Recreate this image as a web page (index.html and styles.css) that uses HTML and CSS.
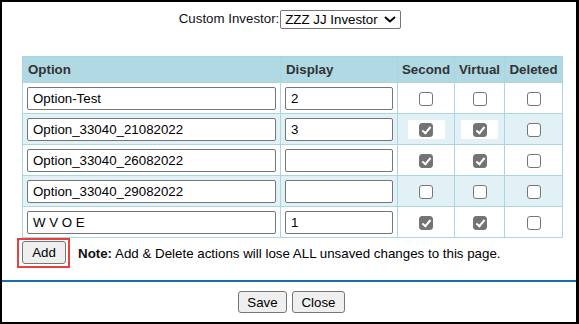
FILE: index.html
```html
<!DOCTYPE html>
<html lang="en">
<head>
    <meta charset="UTF-8">
    <title>Custom Investor Options</title>
    <link rel="stylesheet" href="styles.css">
</head>
<body>
<div class="frame">
    <div class="investor">
        <label for="investor">Custom Investor:</label><span class="picker"><select id="investor"><option>ZZZ JJ Investor</option></select><svg class="chev" width="12" height="7" viewBox="0 0 12 7"><path d="M1 1 L6 5.5 L11 1" fill="none" stroke="#000" stroke-width="2"/></svg></span>
    </div>

    <table class="options">
        <colgroup>
            <col class="c-option">
            <col class="c-display">
            <col class="c-second">
            <col class="c-virtual">
            <col class="c-deleted">
        </colgroup>
        <thead>
            <tr>
                <th class="left">Option</th>
                <th class="left">Display</th>
                <th>Second</th>
                <th>Virtual</th>
                <th>Deleted</th>
            </tr>
        </thead>
        <tbody>
            <tr>
                <td><input class="txt opt" type="text" value="Option-Test"></td>
                <td><input class="txt disp" type="text" value="2"></td>
                <td class="mid"><span class="cb"></span></td>
                <td class="mid"><span class="cb"></span></td>
                <td class="mid"><span class="cb"></span></td>
            </tr>
            <tr>
                <td><input class="txt opt" type="text" value="Option_33040_21082022"></td>
                <td><input class="txt disp" type="text" value="3"></td>
                <td class="mid"><span class="hilite"><span class="cb on"></span></span></td>
                <td class="mid"><span class="hilite"><span class="cb on"></span></span></td>
                <td class="mid"><span class="cb"></span></td>
            </tr>
            <tr>
                <td><input class="txt opt" type="text" value="Option_33040_26082022"></td>
                <td><input class="txt disp" type="text" value=""></td>
                <td class="mid"><span class="cb on"></span></td>
                <td class="mid"><span class="cb on"></span></td>
                <td class="mid"><span class="cb"></span></td>
            </tr>
            <tr>
                <td><input class="txt opt" type="text" value="Option_33040_29082022"></td>
                <td><input class="txt disp" type="text" value=""></td>
                <td class="mid"><span class="cb"></span></td>
                <td class="mid"><span class="cb"></span></td>
                <td class="mid"><span class="cb"></span></td>
            </tr>
            <tr>
                <td><input class="txt opt" type="text" value="W V O E"></td>
                <td><input class="txt disp" type="text" value="1"></td>
                <td class="mid"><span class="cb on"></span></td>
                <td class="mid"><span class="cb on"></span></td>
                <td class="mid"><span class="cb"></span></td>
            </tr>
        </tbody>
    </table>

    <div class="actions">
        <span class="focus"><button class="btn add">Add</button></span>
        <span class="note"><b>Note:</b> Add &amp; Delete actions will lose ALL unsaved changes to this page.</span>
    </div>

    <div class="footer">
        <button class="btn save">Save</button>
        <button class="btn close">Close</button>
    </div>
</div>
</body>
</html>
```

FILE: styles.css
```css
body {
    margin: 0;
    font-family: "Liberation Sans", Arial, sans-serif;
    font-size: 13px;
    color: #000;
    background: #fff;
}
.frame {
    width: 579px;
    height: 324px;
    box-sizing: border-box;
    border: 2px solid #000;
    border-right-width: 3px;
    overflow: hidden;
}
.investor {
    padding-top: 8px;
    text-align: center;
    height: 18px;
    line-height: 18px;
    padding-left: 2px;
}
.investor label {
    color: #111;
    font-size: 13.3px;
}
.picker {
    position: relative;
    display: inline-block;
    vertical-align: top;
    margin-left: 1px;
}
.picker select {
    appearance: none;
    -webkit-appearance: none;
    font-family: "Liberation Sans", Arial, sans-serif;
    font-size: 13.3px;
    width: 121px;
    height: 19px;
    padding: 0 0 0 4px;
    border: 1px solid #767676;
    border-radius: 2px;
    background: #fff;
    color: #000;
    display: block;
}
.chev {
    position: absolute;
    right: 5px;
    top: 6px;
    pointer-events: none;
}

.options {
    margin: 28px 0 0 20px;
    width: 540px;
    border-collapse: collapse;
    table-layout: fixed;
}
.c-option { width: 258px; }
.c-display { width: 117px; }
.c-second { width: 57px; }
.c-virtual { width: 50px; }
.c-deleted { width: 58px; }
.options th,
.options td {
    border: 1px solid #a9d6e1;
    padding: 0;
}
.options th {
    background: #b0d9e3;
    color: #333;
    font-weight: bold;
    font-size: 13.3px;
    height: 25px;
    text-align: center;
}
.options th.left {
    text-align: left;
    padding-left: 5px;
}
.options td {
    height: 30px;
    padding-left: 4px;
}
.options tbody tr:nth-child(even) td {
    background: #e2f1f6;
}
.options td.mid {
    text-align: center;
    padding-left: 0;
}
.txt {
    box-sizing: border-box;
    height: 23px;
    border: 1px solid #767676;
    border-radius: 2px;
    padding: 0 5px;
    font-family: "Liberation Sans", Arial, sans-serif;
    font-size: 13.3px;
    color: #000;
    background: #fff;
    display: block;
}
.opt { width: 249px; }
.disp { width: 108px; }

.cb {
    display: inline-block;
    width: 14px;
    height: 14px;
    box-sizing: border-box;
    border: 1px solid #767676;
    border-radius: 3px;
    background: #fff;
    vertical-align: middle;
    position: relative;
}
.cb.on {
    background: #737373;
}
.cb.on::after {
    content: "";
    position: absolute;
    left: 4px;
    top: 1px;
    width: 3px;
    height: 7px;
    border: solid #fff;
    border-width: 0 2px 2px 0;
    transform: rotate(40deg);
}
.hilite {
    display: inline-block;
    background: #fff;
    width: 37px;
    height: 19px;
    line-height: 19px;
}

.actions {
    display: flex;
    align-items: center;
    padding-left: 15px;
}
.focus {
    display: block;
    border: 2px solid #e8403f;
    padding: 1px 2px 2px 3px;
    margin-right: 8px;
}
.btn {
    font-family: "Liberation Sans", Arial, sans-serif;
    font-size: 13.3px;
    color: #000;
    background: #efefef;
    border: 1px solid #767676;
    border-radius: 3px;
    height: 23px;
    padding: 0 7px;
    display: block;
}
.add { width: 44px; }
.note {
    font-size: 13.33px;
}
.note b {
    color: #111;
}
.footer {
    margin-top: 12px;
    border-top: 2px solid #1b6cab;
    padding-top: 9px;
    display: flex;
    justify-content: center;
    gap: 5px;
    padding-left: 5px;
}
.save { width: 49px; height: 22px; }
.close { width: 53px; height: 22px; }
```
